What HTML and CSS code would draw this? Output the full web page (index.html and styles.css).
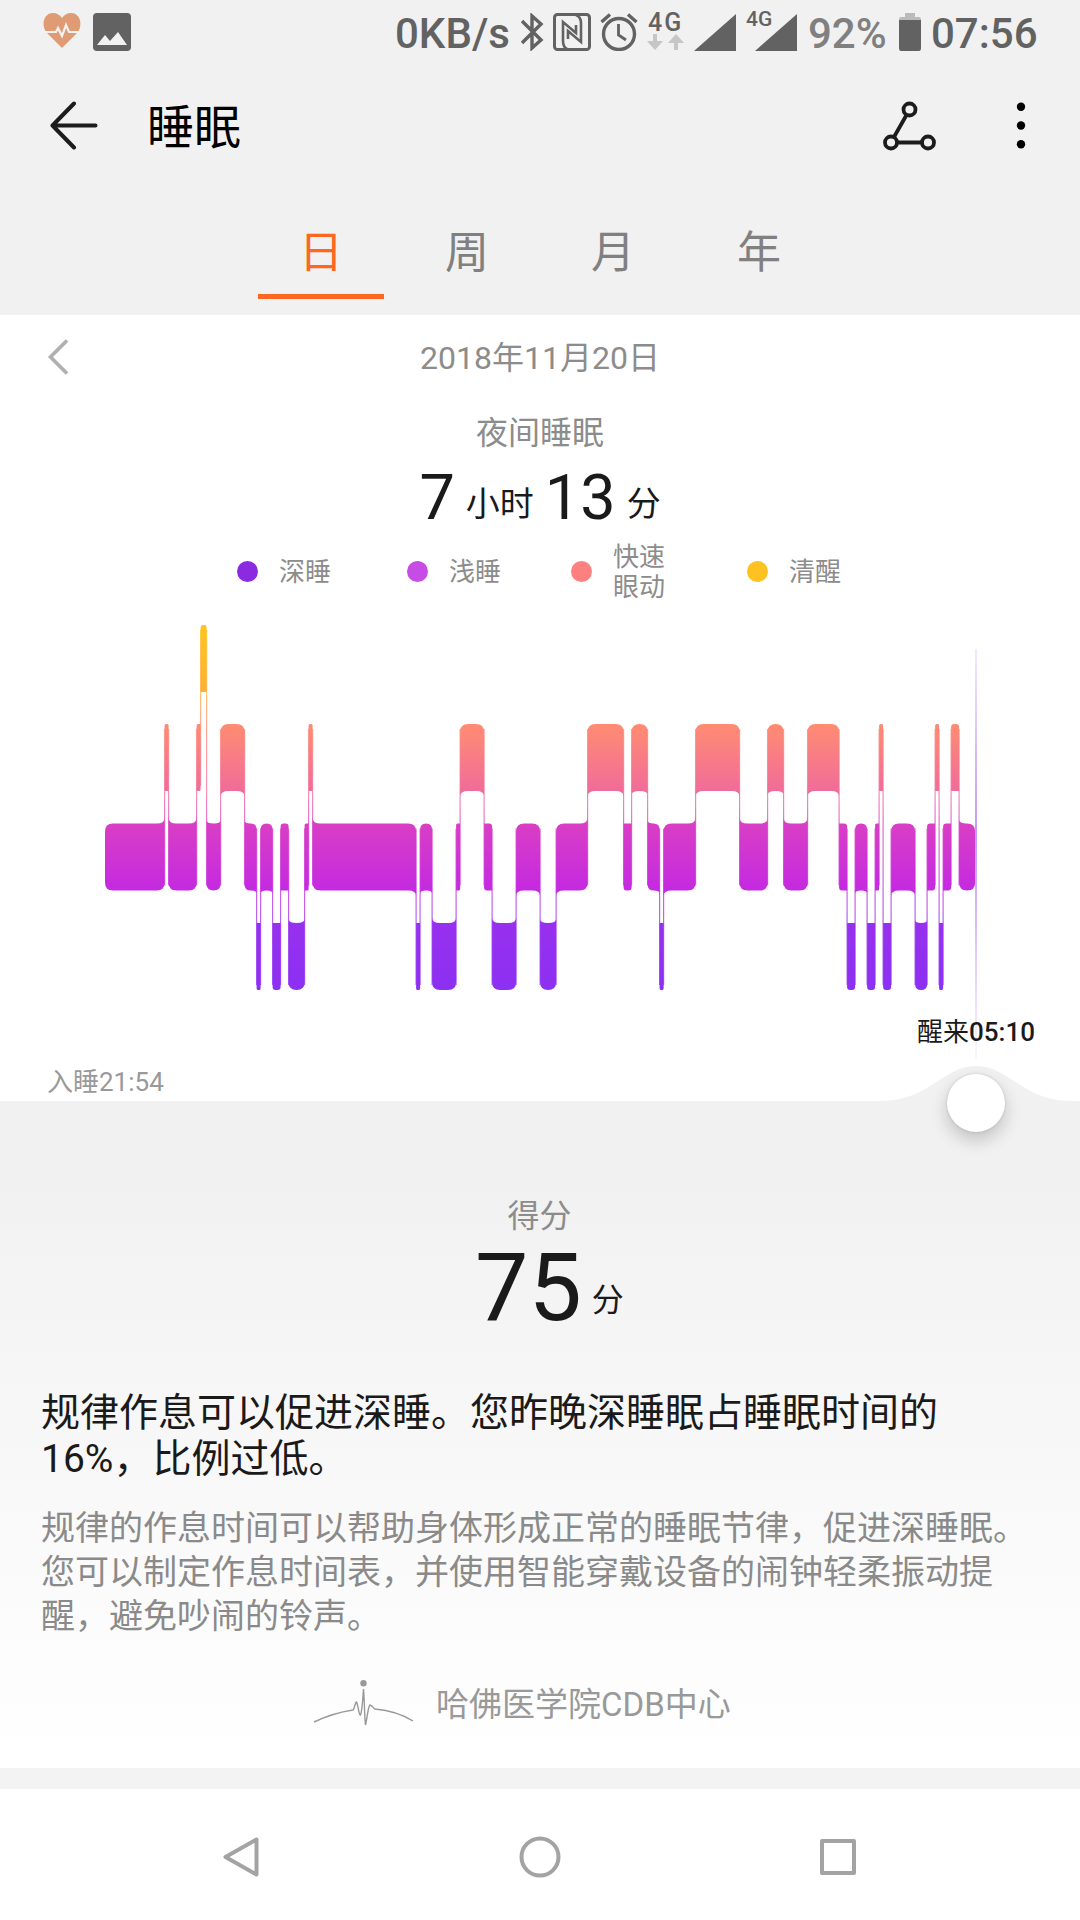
FILE: index.html
```html
<!DOCTYPE html>
<html>
<head>
    <meta charset="utf-8" />
    <meta name="viewport" content="width=device-width,initial-scale=1.0" />
    <title>睡眠</title>
    <link rel="stylesheet" href="styles.css">
</head>
<body>
    <!--状态栏-->
    <div class="status">
        <svg class="heart" width="38" height="36" viewBox="0 0 38 36">
            <path d="M19 35 L3 19 C-2 11 1 0 10 0 C14 0 17 2 19 5 C21 2 24 0 28 0 C37 0 40 11 35 19 Z" fill="#df9b74" />
            <path d="M0 19 H13 L15 15 L19 23 L23 12 L26 19 H38" fill="none" stroke="#f1f1f1" stroke-width="2.2" />
        </svg>
        <svg class="photo" width="38" height="38" viewBox="0 0 38 38">
            <rect width="38" height="38" rx="4" fill="#626262" />
            <path d="M4 32 L12 22 L17 28 L25 19 L34 32 Z" fill="#f1f1f1" />
        </svg>
        <span class="speed">0KB/s</span>
        <svg class="bt" width="24" height="38" viewBox="0 0 24 38">
            <path d="M2 8 L21 27 L12 35 V3 L21 11 L2 30" fill="none" stroke="#626262" stroke-width="3.4" />
        </svg>
        <svg class="nfc" width="38" height="38" viewBox="0 0 38 38" fill="none" stroke="#626262">
            <rect x="1.5" y="1.5" width="35" height="35" rx="3" stroke-width="3" />
            <path d="M14 36 Q10 34 10 28 V9 L23 20 V12 M23 2 Q28 4 28 10 V29 L15 18 V26" stroke-width="2.6" />
        </svg>
        <svg class="alarm" width="38" height="38" viewBox="0 0 38 38" fill="none" stroke="#626262" stroke-width="3.4">
            <circle cx="19" cy="21" r="15.5" />
            <path d="M18.5 11 V22 L26 27" stroke-width="2.8" />
            <path d="M1.5 9 L10 1.5 M28 1.5 L36.5 9" />
        </svg>
        <div class="net">
            <span>4G</span>
            <svg width="38" height="16" viewBox="0 0 38 16" fill="#c6c6c6">
                <path d="M7 0 H11 V7 H17 L9 16 L1 7 H7 Z M28 16 H32 V9 H38 L30 0 L22 9 H28 Z" />
            </svg>
        </div>
        <svg class="signal" width="42" height="37" viewBox="0 0 42 37"><path d="M0 37 L42 0 V37 Z" fill="#626262" /></svg>
        <div class="sim">
            <span>4G</span>
            <svg width="42" height="37" viewBox="0 0 42 37"><path d="M0 37 L42 0 V37 Z" fill="#626262" /></svg>
        </div>
        <span class="percent">92%</span>
        <svg class="battery" width="22" height="38" viewBox="0 0 22 38">
            <path d="M6 0 H16 V4 H20 Q22 4 22 7 H0 Q0 4 2 4 H6 Z" fill="#bababa" />
            <path d="M0 7 H22 V35 Q22 38 20 38 H2 Q0 38 0 35 Z" fill="#626262" />
        </svg>
        <span class="time">07:56</span>
    </div>

    <!--标题-->
    <div class="header">
        <svg width="50" height="50" viewBox="0 0 50 50" fill="none" stroke="#1c1c1c" stroke-width="4" stroke-linecap="round" stroke-linejoin="round">
            <path d="M25 2.5 L3.5 24.5 L25 46.5 M3.5 24.5 H46.5" />
        </svg>
        <h1>睡眠</h1>
        <svg class="share" width="54" height="50" viewBox="0 0 54 50" fill="none" stroke="#1c1c1c" stroke-width="3.8">
            <circle cx="26.5" cy="8.5" r="6" />
            <circle cx="8" cy="41.5" r="6" />
            <circle cx="45" cy="41.5" r="6" />
            <path d="M23.5 14 L11 36 M14 41.5 H39" />
        </svg>
        <svg class="more" width="10" height="50" viewBox="0 0 10 50">
            <circle cx="5" cy="5.8" r="4.2" /><circle cx="5" cy="24.5" r="4.2" /><circle cx="5" cy="43.2" r="4.2" />
        </svg>
    </div>

    <div class="tabs">
        <a class="active">日</a>
        <a>周</a>
        <a>月</a>
        <a>年</a>
    </div>

    <div class="panel">
        <div class="date">
            <svg width="22" height="36" viewBox="0 0 22 36"><path d="M20 1.5 L3.5 18 L20 34.5" fill="none" stroke="#b0b0b0" stroke-width="3.6" /></svg>
            <span>2018年11月20日</span>
        </div>
        <div class="label">夜间睡眠</div>
        <div class="duration"><b>7</b><span>小时</span><b>13</b><span>分</span></div>
        <div class="legend">
            <div><i class="deep"></i>深睡</div>
            <div><i class="light"></i>浅睡</div>
            <div><i class="rem"></i>快速<br />眼动</div>
            <div><i class="awake"></i>清醒</div>
        </div>
        <svg class="chart" width="1080" height="410" viewBox="0 600 1080 410">
            <defs>
                <linearGradient id="stage" gradientUnits="userSpaceOnUse" x1="0" y1="625" x2="0" y2="989">
                    <stop offset="0" stop-color="#ffc421" />
                    <stop offset="0.18" stop-color="#fdb036" />
                    <stop offset="0.272" stop-color="#ff8c72" />
                    <stop offset="0.456" stop-color="#f06c99" />
                    <stop offset="0.547" stop-color="#d93ec5" />
                    <stop offset="0.728" stop-color="#c42ae0" />
                    <stop offset="0.819" stop-color="#9830ee" />
                    <stop offset="1" stop-color="#8c30f2" />
                </linearGradient>
                <linearGradient id="cursor" x1="0" y1="0" x2="0" y2="1">
                    <stop offset="0" stop-color="#f2e9fd" />
                    <stop offset="0.45" stop-color="#c397f0" />
                    <stop offset="1" stop-color="#faf7ff" />
                </linearGradient>
            </defs>
            <path id="links" fill="url(#stage)" opacity="0.75" />
            <path id="bars" fill="url(#stage)" />
            <rect x="975" y="649" width="2" height="411" fill="url(#cursor)" />
        </svg>
        <div class="wake">醒来<b>05:10</b></div>
        <div class="asleep">入睡21:54</div>
        <div class="slider">
            <svg width="190" height="36" viewBox="0 0 190 36"><path d="M0 36 C48 36 62 1 95 1 C128 1 142 36 190 36 Z" fill="#f1f1f1" /></svg>
            <i></i>
        </div>
    </div>

    <div class="score">
        <div class="label">得分</div>
        <div class="point"><b>75</b><span>分</span></div>
        <p class="result">规律作息可以促进深睡。您昨晚深睡眠占睡眠时间的16%，比例过低。</p>
        <p class="advice">规律的作息时间可以帮助身体形成正常的睡眠节律，促进深睡眠。您可以制定作息时间表，并使用智能穿戴设备的闹钟轻柔振动提醒，避免吵闹的铃声。</p>
        <div class="source">
            <svg width="102" height="48" viewBox="0 0 102 48">
                <circle cx="50.5" cy="3.2" r="3.2" fill="#999" />
                <path d="M1 42 Q20 33 40 30 C42 28 42 22 43.5 22 C45 24 46 36 47.5 35 C49 32 50 16 50.5 9 C51.5 20 51.5 38 52.5 45 C54 40 55 26 57 25 C60 26 60 28 62 29 Q84 31 100 41" fill="none" stroke="#999" stroke-width="1.4" />
            </svg>
            <span>哈佛医学院CDB中心</span>
        </div>
    </div>

    <!--导航栏-->
    <div class="nav">
        <svg width="44" height="44" viewBox="0 0 44 44"><path d="M37.5 4.5 V39.5 L6.5 22 Z" /></svg>
        <svg width="44" height="44" viewBox="0 0 44 44"><circle cx="22" cy="22" r="18.5" /></svg>
        <svg width="44" height="44" viewBox="0 0 44 44"><rect x="6" y="6" width="32" height="32" /></svg>
    </div>

    <script type="text/javascript">
        //睡眠阶段：[类型, 结束位置]，0清醒 1快速眼动 2浅睡 3深睡
        var data = [[2, 165], [1, 169], [2, 197], [1, 201], [0, 207], [2, 221], [1, 245], [2, 257], [3, 261], [2, 273],
            [3, 281], [2, 289], [3, 305], [2, 309], [1, 313], [2, 416.5], [3, 420.5], [2, 432.5], [3, 456.5], [2, 460.5],
            [1, 484.5], [2, 492.5], [3, 516.5], [2, 540.5], [3, 556.5], [2, 588], [1, 624], [2, 632], [1, 648], [2, 660],
            [3, 664], [2, 696], [1, 740], [2, 768], [1, 784], [2, 808], [1, 839.5], [2, 847.5], [3, 855.5], [2, 867.5],
            [3, 875.5], [2, 879.5], [1, 883.5], [3, 891.5], [2, 915.5], [3, 927.5], [2, 935.5], [1, 939.5], [3, 943.5],
            [2, 951.5], [1, 959.5], [2, 975.5]];
        var tops = [625, 724, 823.5, 923];
        var h = 67;

        function drawStages() {
            var bars = "";
            var links = "";
            var x = 105;
            for (var i = 0; i < data.length; i++) {
                var t = data[i][0], e = data[i][1] - 0.4, w = e - x;
                var y = tops[t], b = y + h;
                var prev = i > 0 ? data[i - 1][0] : t;
                var next = i < data.length - 1 ? data[i + 1][0] : t;
                var r = w < 10 ? w * 0.38 : Math.min(8, w / 2);
                var f = w < 10 ? 0 : Math.min(5.5, w / 4);
                //与相邻阶段相连的一侧向外延伸，其余为圆角
                var tl = prev < t ? -f : r, tr = next < t ? -f : r;
                var bl = prev > t ? -f : r, br = next > t ? -f : r;
                bars += "M" + x + " " + (y + tl) + "Q" + x + " " + y + " " + (x + r) + " " + y
                    + "H" + (e - r) + "Q" + e + " " + y + " " + e + " " + (y + tr)
                    + "V" + (b - br) + "Q" + e + " " + b + " " + (e - r) + " " + b
                    + "H" + (x + r) + "Q" + x + " " + b + " " + x + " " + (b - bl) + "Z";
                if (i < data.length - 1) {
                    var y1 = tops[Math.min(t, next)] + 5, y2 = tops[Math.max(t, next)] + h - 5;
                    links += "M" + (e - 0.6) + " " + y1 + "h1.2V" + y2 + "h-1.2Z";
                }
                x = e;
            }
            document.getElementById('bars').setAttribute('d', bars);
            document.getElementById('links').setAttribute('d', links);
        }
        drawStages();
    </script>
</body>
</html>
```
FILE: styles.css
```css
* {
    padding: 0;
    margin: 0;
    box-sizing: border-box;
}

body {
    width: 1080px;
    height: 1920px;
    background: #f1f1f1;
    font-family: Roboto, "Noto Sans CJK SC", sans-serif;
    color: #1a1a1a;
    overflow: hidden;
}

svg {
    display: block;
    flex: none;
}

b, i {
    font-weight: normal;
    font-style: normal;
}

.status {
    height: 64px;
    padding: 0 0 0 43px;
    display: flex;
    align-items: center;
    font-size: 42px;
    line-height: 64px;
    color: #626262;
    white-space: nowrap;
}

    .status .heart {
        margin-top: -2px;
    }

    .status .photo {
        margin-left: 12px;
        margin-top: -1px;
    }

.speed {
    width: 117px;
    margin-left: 264px;
    font-weight: 500;
    padding-top: 3px;
}

.bt {
    margin-left: 8px;
}

.nfc {
    margin-left: 9px;
}

.status .alarm {
    margin-left: 9px;
}

.net {
    width: 38px;
    height: 38px;
    margin-left: 8px;
    font-size: 25px;
    font-weight: 500;
    line-height: 20px;
}

    .net span {
        display: block;
        height: 21px;
        margin-left: 2px;
        letter-spacing: 2px;
    }

.signal {
    margin-left: 10px;
}

.sim {
    width: 51px;
    margin-left: 10px;
    position: relative;
}

    .sim span {
        position: absolute;
        left: 0;
        top: -5px;
        font-size: 21px;
        font-weight: 500;
        line-height: 21px;
    }

    .sim svg {
        margin-left: 9px;
    }

.percent {
    width: 79px;
    margin-left: 11px;
    font-weight: 500;
    color: #808080;
    padding-top: 3px;
}

.battery {
    margin-left: 12px;
}

.time {
    margin-left: 10px;
    font-weight: 500;
    padding-top: 3px;
}

.header {
    height: 124px;
    padding: 0 54px 0 49px;
    display: flex;
    align-items: center;
}

    .header h1 {
        flex: 1;
        margin-left: 48px;
        padding-top: 4px;
        font-size: 47px;
        font-weight: normal;
        line-height: 60px;
        color: #000;
    }

    .header .more {
        margin-left: 79px;
    }

.tabs {
    height: 127px;
    padding-bottom: 16px;
    display: flex;
    justify-content: center;
    align-items: flex-end;
    gap: 20px;
}

    .tabs a {
        width: 126px;
        height: 94px;
        border-bottom: 5px solid transparent;
        font-size: 44px;
        line-height: 96px;
        text-align: center;
        color: #808080;
    }

    .tabs .active {
        color: #fd6721;
        border-color: #fd6721;
    }

.panel {
    position: relative;
    height: 786px;
    background: #fff;
    color: #8c8c8c;
}

.date {
    height: 84px;
    padding: 0 47px;
    display: flex;
    align-items: center;
    font-size: 32px;
}

    .date span {
        flex: 1;
        margin: -5px 22px 0 0;
        text-align: center;
    }

.label {
    font-size: 32px;
    line-height: 40px;
    text-align: center;
    color: #8c8c8c;
}

.panel .label {
    margin-top: 14px;
}

.duration {
    margin-top: 13px;
    height: 63px;
    display: flex;
    justify-content: center;
    align-items: baseline;
    line-height: 64px;
    color: #1a1a1a;
}

    .duration b {
        font-size: 63px;
    }

    .duration span {
        font-size: 34px;
        margin: 0 11px 0 11px;
        position: relative;
        top: -3px;
    }

        .duration span:last-child {
            margin-right: 0;
        }

.legend {
    margin-top: 12px;
    height: 62px;
    padding-left: 237px;
    display: flex;
    align-items: center;
    font-size: 26px;
    line-height: 30px;
}

    .legend div {
        display: flex;
        align-items: center;
        width: 170px;
    }

        .legend div:nth-child(2) {
            width: 164px;
        }

        .legend div:nth-child(3) {
            width: 176px;
        }

    .legend i {
        width: 21px;
        height: 21px;
        margin: -1px 21px 0 0;
        border-radius: 50%;
    }

.deep {
    background: #8a2be2;
}

.light {
    background: #c74be5;
}

.rem {
    background: #fd8080;
}

.awake {
    background: #fdc221;
}

.chart {
    margin-top: -3px;
    overflow: visible;
}

.wake {
    margin: 4px 45px 0 0;
    font-size: 26px;
    line-height: 36px;
    text-align: right;
    color: #1a1a1a;
    position: relative;
}

    .wake b {
        font-weight: 500;
    }

.asleep {
    margin: 14px 0 0 47px;
    font-size: 26px;
    line-height: 36px;
    color: #999;
}

/* 时间滑块 */
.slider {
    position: absolute;
    right: 9px;
    bottom: 0;
    width: 190px;
    height: 36px;
}

    .slider i {
        position: absolute;
        left: 66px;
        top: 9px;
        width: 58px;
        height: 58px;
        border-radius: 50%;
        background: #fff;
        box-shadow: 0 8px 18px rgba(0, 0, 0, 0.2), 0 0 3px rgba(0, 0, 0, 0.15);
    }

.score {
    height: 667px;
    padding: 95px 42px 0 41px;
    background: linear-gradient(#f1f1f1, #f1f1f1 10%, #fff);
}

.point {
    display: flex;
    align-items: baseline;
    height: 104px;
    padding-left: 434px;
    line-height: 104px;
}

    .point b {
        font-size: 95px;
    }

    .point span {
        margin-left: 10px;
        font-size: 32px;
        position: relative;
        top: -9px;
    }

.result {
    margin-top: 50px;
    font-size: 39px;
    line-height: 46px;
}

.advice {
    margin: 24px -10px 0 0;
    font-size: 34px;
    line-height: 44px;
    color: #8a8a8a;
}

.source {
    margin-top: 42px;
    padding-left: 272px;
    display: flex;
    font-size: 33px;
    line-height: 50px;
    color: #999;
}

    .source span {
        margin-left: 21px;
    }

.nav {
    height: 152px;
    border-top: 21px solid #f3f3f3;
    background: #fff;
    padding: 5px 220px 0 219px;
    display: flex;
    justify-content: space-between;
    align-items: center;
}

    .nav svg {
        fill: none;
        stroke: #a3a3a3;
        stroke-width: 4;
        stroke-linejoin: round;
    }
```
